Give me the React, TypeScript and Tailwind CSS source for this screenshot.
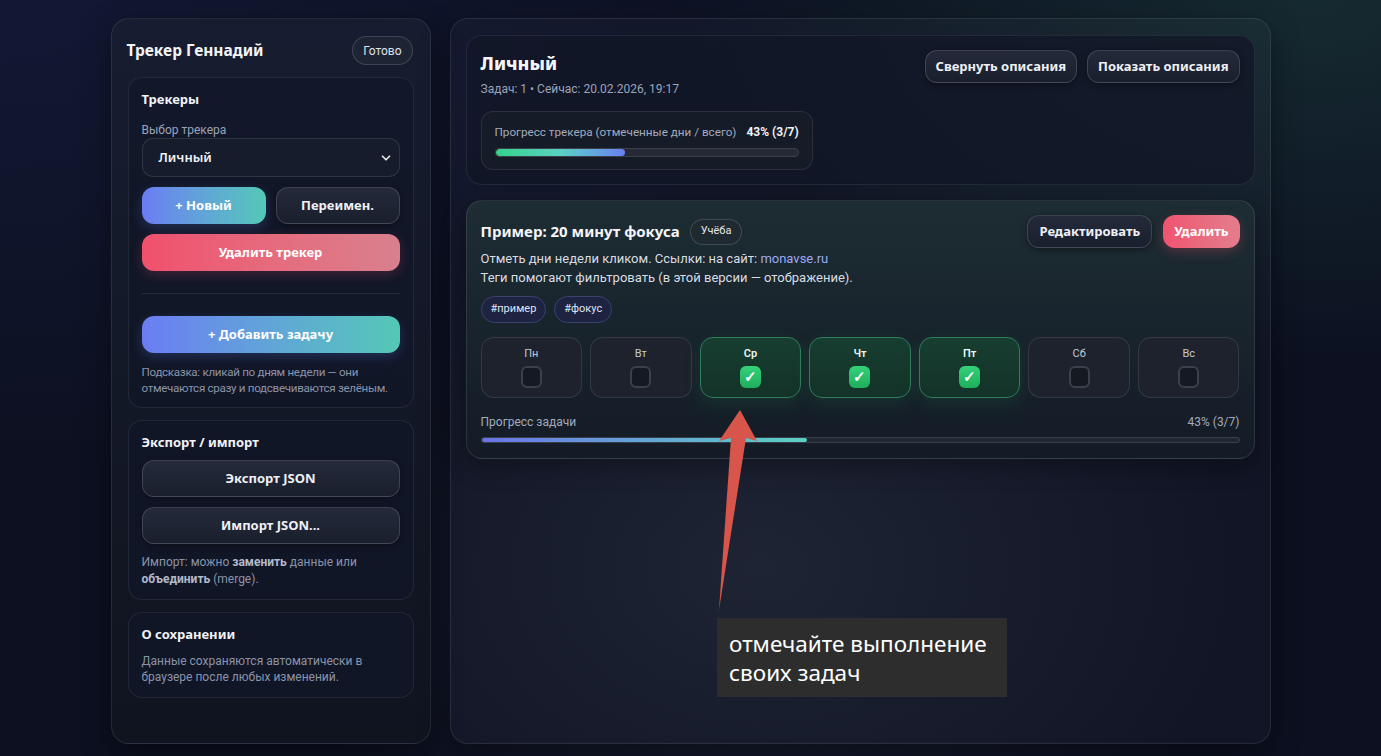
import { ChevronDown } from 'lucide-react'

const days = [
  { label: 'Пн', done: false },
  { label: 'Вт', done: false },
  { label: 'Ср', done: true },
  { label: 'Чт', done: true },
  { label: 'Пт', done: true },
  { label: 'Сб', done: false },
  { label: 'Вс', done: false },
]

const darkBtn =
  "flex items-center justify-center rounded-[12px] border border-white/15 bg-gradient-to-b from-[#242a3a] to-[#1a1f2d] font-['Noto_Sans'] text-[13px] font-bold text-[#eef0f6] shadow-[0_2px_6px_rgba(0,0,0,0.35)]"

const gradBtn =
  "flex items-center justify-center rounded-[12px] bg-gradient-to-r from-[#6b7cf3] to-[#54c8b6] font-['Noto_Sans'] text-[13px] font-bold text-white shadow-[0_4px_12px_rgba(80,120,220,0.25)]"

const heading = "font-['Noto_Sans'] text-[13px] font-bold leading-[18px] text-[#f1f3f8]"

function SideCard({ children, className = '' }: { children: React.ReactNode; className?: string }) {
  return (
    <div className={`rounded-[14px] border border-white/[0.07] bg-[#111728]/80 px-[13px] ${className}`}>
      {children}
    </div>
  )
}

function Sidebar() {
  return (
    <aside className="flex h-[726px] w-[320px] shrink-0 flex-col rounded-[18px] border border-white/[0.09] bg-gradient-to-b from-[#171d30] to-[#10141f] px-4 pt-[17px] shadow-[0_10px_30px_rgba(0,0,0,0.4)]">
      <div className="flex items-center justify-between">
        <h1 className="-ml-[1px] font-['Noto_Sans'] text-[15.5px] font-bold text-[#f3f4f8]">Трекер Геннадий</h1>
        <button className="mr-[1px] h-[29px] rounded-full border border-white/15 bg-[#1e2434] px-[10px] text-[12px] text-[#dfe3ec]">
          Готово
        </button>
      </div>

      <SideCard className="mt-[12px] pb-[11px] pt-[12px]">
        <h2 className={heading}>Трекеры</h2>
        <div className="mt-[14px] text-[12px] leading-[16px] text-[#9aa3b8]">Выбор трекера</div>
        <div className="flex h-[39px] items-center justify-between rounded-[11px] border border-white/10 bg-[#161c2b] pl-[16px] pr-[6px]">
          <span className="font-['Noto_Sans'] text-[13px] font-semibold text-[#eef0f6]">Личный</span>
          <ChevronDown className="h-[14px] w-[14px] text-[#e5e7eb]" strokeWidth={3} />
        </div>
        <div className="mt-[10px] grid grid-cols-2 gap-[10px]">
          <button className={`${gradBtn} h-[37px]`}>+ Новый</button>
          <button className={`${darkBtn} h-[37px]`}>Переимен.</button>
        </div>
        <button className="mt-[10px] flex h-[37px] w-full items-center justify-center rounded-[12px] bg-gradient-to-r from-[#f1506c] to-[#d8808e] font-['Noto_Sans'] text-[13px] font-bold text-white shadow-[0_4px_12px_rgba(240,80,110,0.2)]">
          Удалить трекер
        </button>
        <div className="mt-[22px] border-t border-white/[0.08]" />
        <button className={`${gradBtn} mt-[22px] h-[37px] w-full`}>+ Добавить задачу</button>
        <p className="-mr-[4px] mt-[11px] text-[11.6px] leading-[16px] tracking-[-0.3px] text-[#8a93a9]">
          Подсказка: кликай по дням недели — они отмечаются сразу и подсвечиваются зелёным.
        </p>
      </SideCard>

      <SideCard className="mt-[12px] pb-[11px] pt-[12px]">
        <h2 className={heading}>Экспорт / импорт</h2>
        <button className={`${darkBtn} mt-[9px] h-[37px] w-full`}>Экспорт JSON</button>
        <button className={`${darkBtn} mt-[10px] h-[37px] w-full`}>Импорт JSON...</button>
        <p className="mt-[10px] text-[12px] leading-[17px] text-[#8a93a9]">
          Импорт: можно <b className="font-bold text-[#b3bacb]">заменить</b> данные или{' '}
          <b className="font-bold text-[#b3bacb]">объединить</b> (merge).
        </p>
      </SideCard>

      <SideCard className="mt-[12px] pb-[12px] pt-[12px]">
        <h2 className={heading}>О сохранении</h2>
        <p className="mt-[10px] text-[12px] leading-[16px] text-[#8a93a9]">
          Данные сохраняются автоматически в браузере после любых изменений.
        </p>
      </SideCard>
    </aside>
  )
}

function DayCell({ label, done }: { label: string; done: boolean }) {
  return (
    <div
      className={`flex h-[61px] flex-col items-center rounded-[13px] border pt-[9px] ${
        done
          ? 'border-[#2f7d5c] bg-gradient-to-b from-[#173d31] to-[#143328] shadow-[0_6px_18px_rgba(34,197,94,0.12)]'
          : 'border-white/10 bg-[#1d222d]'
      }`}
    >
      <span className={`text-[11px] leading-[14px] ${done ? 'font-semibold text-[#e9f5ef]' : 'text-[#c4c9d4]'}`}>
        {label}
      </span>
      {done ? (
        <div className="mt-[5px] flex h-[22px] w-[21px] items-center justify-center rounded-[6px] bg-gradient-to-b from-[#34d27a] to-[#1fae5c] text-[15px] font-bold leading-none text-white">
          ✓
        </div>
      ) : (
        <div className="mt-[5px] h-[22px] w-[21px] rounded-[6px] border-2 border-[#3a404c] bg-[#151922]" />
      )}
    </div>
  )
}

function MainPanel() {
  return (
    <section className="h-[726px] flex-1 rounded-[18px] border border-white/[0.09] bg-white/[0.025] px-[15px] pt-[16px] shadow-[0_10px_30px_rgba(0,0,0,0.35)]">
      {/* tracker header */}
      <div className="rounded-[16px] border border-white/[0.08] bg-[#111727]/80 px-[14px] pb-[14px] pt-[14px]">
        <div className="flex items-start justify-between">
          <div className="pt-[1px]">
            <h2 className="font-['Noto_Sans'] text-[18px] font-extrabold leading-[24px] text-[#f4f5f9]">Личный</h2>
            <div className="mt-[6px] text-[12px] leading-[16px] text-[#9ba3b6]">Задач: 1 • Сейчас: 20.02.2026, 19:17</div>
          </div>
          <div className="flex gap-[10px]">
            <button className={`${darkBtn} h-[33px] px-[10px]`}>Свернуть описания</button>
            <button className={`${darkBtn} h-[33px] px-[10px]`}>Показать описания</button>
          </div>
        </div>
        <div className="mt-[14px] w-fit rounded-[12px] border border-white/[0.09] bg-[#161b28] px-[13px] pb-[12px] pt-[12px]">
          <div className="flex items-center gap-[10px] whitespace-nowrap text-[12px] leading-[16px]">
            <span className="text-[11.7px] text-[#a3abbd]">Прогресс трекера (отмеченные дни / всего)</span>
            <span className="font-bold text-[#f1f3f8]">43% (3/7)</span>
          </div>
          <div className="mt-[8px] h-[9px] w-full overflow-hidden rounded-full border border-white/10 bg-[#252a36]">
            <div className="h-full rounded-full bg-gradient-to-r from-[#31d48a] via-[#5ad0c2] to-[#6a7ef2]" style={{ width: '43%' }} />
          </div>
        </div>
      </div>

      {/* task card */}
      <div className="mt-[15px] rounded-[16px] border border-white/[0.1] bg-gradient-to-b from-[#1d2d33] to-[#141b26] px-[14px] pb-[15px] pt-[14px] shadow-[0_8px_24px_rgba(0,0,0,0.3)]">
        <div className="flex items-center justify-between">
          <div className="flex items-center gap-[10px]">
            <h3 className="font-['Noto_Sans'] text-[15px] font-bold text-[#f4f5f9]">Пример: 20 минут фокуса</h3>
            <span className="flex h-[26px] items-center rounded-full border border-white/15 bg-[#1f2a30] px-[10px] text-[11px] text-[#e1e5ec]">
              Учёба
            </span>
          </div>
          <div className="flex gap-[11px]">
            <button className={`${darkBtn} h-[33px] px-[11px]`}>Редактировать</button>
            <button className="flex h-[33px] items-center rounded-[12px] bg-gradient-to-r from-[#f0536f] to-[#e27d8d] px-[11px] font-['Noto_Sans'] text-[13px] font-bold text-white shadow-[0_4px_12px_rgba(240,80,110,0.25)]">
              Удалить
            </button>
          </div>
        </div>
        <div className="mt-[1px] text-[13px] leading-[19px] text-[#d8dce4]">
          <p>
            Отметь дни недели кликом. Ссылки: на сайт: <span className="text-[#9fa8f5]">monavse.ru</span>
          </p>
          <p>Теги помогают фильтровать (в этой версии — отображение).</p>
        </div>
        <div className="mt-[9px] flex gap-[8px]">
          <span className="flex h-[27px] items-center rounded-full border border-[#3b4270] bg-[#1d2340] px-[9px] text-[11px] text-[#dfe3f5]">
            #пример
          </span>
          <span className="flex h-[27px] items-center rounded-full border border-[#3b4270] bg-[#1d2340] px-[9px] text-[11px] text-[#dfe3f5]">
            #фокус
          </span>
        </div>
        <div className="mt-[14px] grid grid-cols-7 gap-[8px]">
          {days.map((d) => (
            <DayCell key={d.label} label={d.label} done={d.done} />
          ))}
        </div>
        <div className="mt-[16px] flex justify-between text-[12px] leading-[16px] text-[#a3abbd]">
          <span>Прогресс задачи</span>
          <span>43% (3/7)</span>
        </div>
        <div className="mt-[7px] h-[6px] w-full overflow-hidden rounded-full border border-white/10 bg-[#222833]">
          <div className="h-full rounded-full bg-gradient-to-r from-[#6a74e6] to-[#5ad0c2]" style={{ width: '43%' }} />
        </div>
      </div>
    </section>
  )
}

export default function App() {
  return (
    <div
      className="relative min-h-screen overflow-hidden bg-[#0c1020] bg-[radial-gradient(ellipse_at_95%_0%,rgba(40,90,80,0.35),transparent_35%),radial-gradient(ellipse_at_55%_75%,rgba(60,70,90,0.28),transparent_45%),radial-gradient(ellipse_at_0%_0%,rgba(30,40,90,0.35),transparent_45%)]"
      style={{ fontFamily: 'Roboto, "Noto Sans", sans-serif' }}
    >
      <div className="mx-auto flex w-[1160px] gap-[19px] pt-[18px]">
        <Sidebar />
        <MainPanel />
      </div>

      {/* annotation overlay */}
      <svg className="pointer-events-none absolute left-0 top-0" width="1381" height="756">
        <polygon points="740,410 757,441 746,438 719,610 731,438 719,441" fill="#d8554b" />
      </svg>
      <div
        className="absolute left-[717px] top-[618px] w-[290px] bg-[#2e2e2e]/95 px-[12px] pb-[10px] pt-[11px] text-[22.5px] leading-[29px] text-white"
        style={{ fontFamily: '"Noto Sans", sans-serif' }}
      >
        отмечайте выполнение
        <br />
        своих задач
      </div>
    </div>
  )
}
